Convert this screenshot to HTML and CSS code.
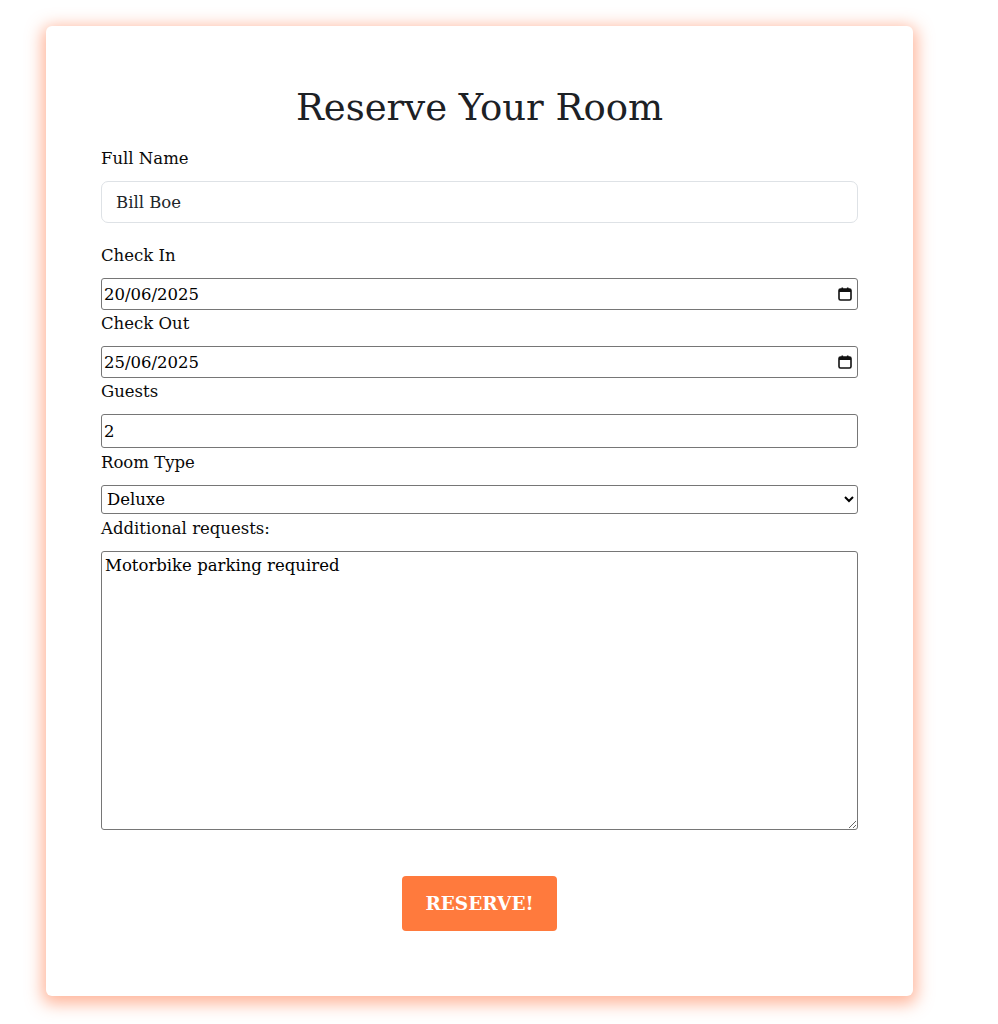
FILE: index.html
```html
<!DOCTYPE html>
<html lang="en">
<head>
<meta charset="utf-8">
<title>Reserve Your Room</title>
<link rel="stylesheet" href="styles.css">
</head>
<body>
<main class="card">
  <h1 class="title">Reserve Your Room</h1>
  <form class="form">
    <div class="group group-name">
      <label class="label" for="name">Full Name</label>
      <input class="control-soft" id="name" type="text" value="Bill Boe">
    </div>
    <div class="group">
      <label class="label" for="in">Check In</label>
      <div class="date">
        <input class="control date-input" id="in" type="text" value="20/06/2025">
        <svg class="cal" viewBox="0 0 16 16" width="16" height="16"><rect x="2" y="3" width="12" height="11" rx="1.5" fill="none" stroke="#111" stroke-width="1.6"/><rect x="2" y="3" width="12" height="3" fill="#111"/><rect x="4.5" y="1.5" width="1.6" height="2.5" fill="#111"/><rect x="9.9" y="1.5" width="1.6" height="2.5" fill="#111"/></svg>
      </div>
    </div>
    <div class="group">
      <label class="label" for="out">Check Out</label>
      <div class="date">
        <input class="control date-input" id="out" type="text" value="25/06/2025">
        <svg class="cal" viewBox="0 0 16 16" width="16" height="16"><rect x="2" y="3" width="12" height="11" rx="1.5" fill="none" stroke="#111" stroke-width="1.6"/><rect x="2" y="3" width="12" height="3" fill="#111"/><rect x="4.5" y="1.5" width="1.6" height="2.5" fill="#111"/><rect x="9.9" y="1.5" width="1.6" height="2.5" fill="#111"/></svg>
      </div>
    </div>
    <div class="group group-guests">
      <label class="label" for="guests">Guests</label>
      <input class="control guests" id="guests" type="text" value="2">
    </div>
    <div class="group group-room">
      <label class="label" for="room">Room Type</label>
      <select class="control select" id="room">
        <option>Deluxe</option>
        <option>Standard</option>
        <option>Suite</option>
      </select>
    </div>
    <div class="group">
      <label class="label" for="req">Additional requests:</label>
      <textarea class="control area" id="req">Motorbike parking required</textarea>
    </div>
    <div class="actions">
      <button class="btn" type="button">RESERVE!</button>
    </div>
  </form>
</main>
</body>
</html>
```
FILE: styles.css
```css
* { box-sizing: border-box; }
html, body { min-height: 1024px; }
body {
  margin: 0;
  padding-bottom: 28px;
  background: #ffffff;
  font-family: "DejaVu Serif", "Liberation Serif", serif;
  color: #212529;
}
.card {
  margin: 26px 0 0 46px;
  width: 867px;
  height: 970px;
  padding: 0 55px;
  background: #fff;
  border-radius: 6px;
  box-shadow: 0 4px 16px 4px rgba(255, 112, 60, 0.5);
}
.title {
  margin: 0;
  padding-top: 59px;
  height: 119px;
  font-size: 37px;
  font-weight: 400;
  line-height: 46px;
  text-align: center;
  color: #1d2125;
}
.form { display: flex; flex-direction: column; }
.group { display: flex; flex-direction: column; }
.group-name { margin-bottom: 19px; }
.group-guests { margin-bottom: 1px; }
.group-room { margin-bottom: 1px; }
.label {
  font-size: 16.5px;
  line-height: 27px;
  height: 27px;
  margin-bottom: 9px;
  color: #0a0a0a;
}
.control-soft {
  height: 42px;
  border: 1px solid #dee2e6;
  border-radius: 7px;
  padding: 0 14px;
  font: inherit;
  font-size: 16.5px;
  color: #212529;
}
.control {
  font-family: inherit;
  font-size: 16.5px;
  color: #000;
  border: 1px solid #767676;
  border-radius: 3px;
  padding: 0 2px;
  background: #fff;
}
.date { position: relative; display: flex; }
.date-input { width: 100%; height: 32px; }
.cal { position: absolute; right: 5px; top: 8px; }
.guests { height: 34px; }
.select { height: 29px; padding: 0 1px; }
.area { height: 279px; resize: vertical; padding: 3px; line-height: 1.3; }
.actions { display: flex; justify-content: center; margin-top: 46px; }
.btn {
  width: 155px;
  height: 55px;
  background: #ff7a3d;
  color: #fff;
  border: 0;
  border-radius: 4px;
  font-family: inherit;
  font-weight: 700;
  font-size: 18.5px;
}
```
